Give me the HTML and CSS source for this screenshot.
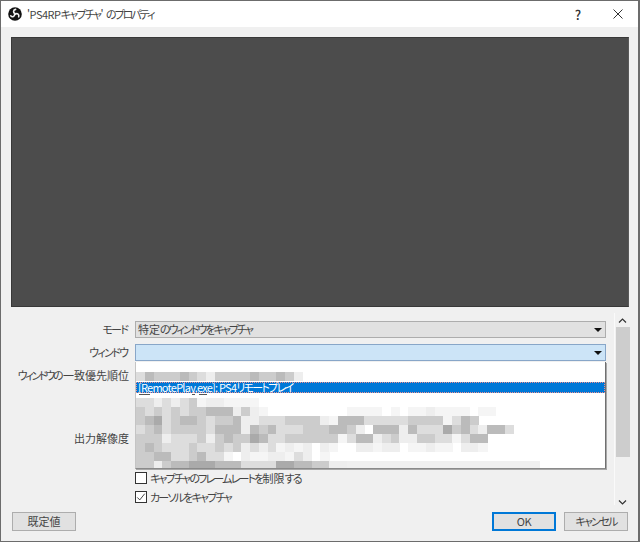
FILE: index.html
```html
<!DOCTYPE html>
<html lang="ja">
<head>
<meta charset="utf-8">
<title>'PS4RPキャプチャ' のプロパティ</title>
<link rel="stylesheet" href="styles.css">
</head>
<body>
<div class="dialog">
  <header class="titlebar">
    <svg class="logo" viewBox="0 0 14 14" width="14" height="14">
      <circle cx="7" cy="7" r="6.8" fill="#111"/>
      <g fill="none" stroke="#f0f0f0" stroke-width="1.6" stroke-linecap="round">
        <path d="M7 6.6C4.8 5.6 5.2 2.8 7.6 2.4"/>
        <path d="M7 6.6C4.8 5.6 5.2 2.8 7.6 2.4" transform="rotate(120 7 7)"/>
        <path d="M7 6.6C4.8 5.6 5.2 2.8 7.6 2.4" transform="rotate(240 7 7)"/>
      </g>
    </svg>
    <span class="title"><span class="lat">'PS4RP</span><span class="kana">キャプチャ</span><span class="lat">'</span><span class="kana title-end">のプロパティ</span></span>
    <span class="help">?</span>
    <svg class="close" viewBox="0 0 10 10" width="10" height="10">
      <path d="M.5.5l9 9M9.5.5l-9 9" stroke="#333" stroke-width="1" fill="none"/>
    </svg>
  </header>
  <main class="body">
    <div class="preview"></div>
    <div class="props">
      <div class="form">
        <div class="row">
          <label class="label"><span class="kana">モード</span></label>
          <div class="combo combo-text">特定<span class="kana">のウィンドウをキャプチャ</span><i class="arrow"></i></div>
        </div>
        <div class="row">
          <label class="label"><span class="kana">ウィンドウ</span></label>
          <div class="field">
            <div class="combo combo-open"><i class="arrow"></i></div>
            <div class="popup">
              <svg class="mosaic mosaic-top" id="mosaicTop" width="470" height="10"></svg>
              <div class="option"><span class="lat">[RemotePlay.exe]: PS4</span><span class="kana">リモートプレイ</span></div>
              <svg class="mosaic mosaic-bottom" id="mosaicBottom" width="470" height="75"></svg>
            </div>
          </div>
        </div>
        <div class="row">
          <label class="label"><span class="kana kana-long">ウィンドウの</span>一致優先順位</label>
          <div class="combo"></div>
        </div>
        <div class="row row-res">
          <label class="label">出力解像度</label>
          <div class="combo"></div>
        </div>
        <div class="checks">
          <div class="check">
            <span class="box"></span><span><span class="kana">キャプチャのフレームレートを</span>制限<span class="kana">する</span></span>
          </div>
          <div class="check">
            <span class="box">
              <svg viewBox="0 0 12 12" width="10" height="10"><path d="M1.5 6.5l3 3 6-7.5" stroke="#222" stroke-width="1" fill="none"/></svg>
            </span><span class="kana">カーソルをキャプチャ</span>
          </div>
        </div>
      </div>
      <div class="scrollbar">
        <svg class="chev" viewBox="0 0 9 5" width="9" height="5"><path d="M1 4.5l3.5-3.5 3.5 3.5" stroke="#333" stroke-width="1.2" fill="none"/></svg>
        <div class="track"><div class="thumb"></div></div>
        <svg class="chev" viewBox="0 0 9 5" width="9" height="5"><path d="M1 .5l3.5 3.5 3.5-3.5" stroke="#333" stroke-width="1.2" fill="none"/></svg>
      </div>
    </div>
    <footer class="footer">
      <button class="btn">既定値</button>
      <span class="spacer"></span>
      <button class="btn btn-default"><span class="lat">OK</span></button>
      <button class="btn"><span class="kana">キャンセル</span></button>
    </footer>
  </main>
</div>
<script src="mosaic.js"></script>
</body>
</html>
```
FILE: styles.css
```css
* { box-sizing: border-box; }
html, body { margin: 0; padding: 0; }
body {
  width: 640px;
  height: 542px;
  overflow: hidden;
  font-family: "Noto Sans CJK JP", "Noto Sans", sans-serif;
  font-size: 11px;
  font-feature-settings: "palt";
  color: #444;
}
.kana { letter-spacing: -1.7px; }
.lat { letter-spacing: -0.5px; }
.dialog {
  width: 640px;
  height: 542px;
  display: flex;
  flex-direction: column;
  border: 1px solid #6c6c6c;
  border-right-width: 2px;
  background: #f0f0f0;
}
.titlebar {
  height: 26px;
  flex: none;
  display: flex;
  align-items: center;
  background: #fff;
  padding-left: 7px;
}
.logo { flex: none; }
.title { margin-left: 5px; flex: 1; color: #444; white-space: nowrap; }
.title-end { margin-left: 3px; letter-spacing: -2px; }
.help { width: 10px; margin-right: 30px; font-size: 13px; font-weight: 500; color: #333; text-align: center; }
.close { margin-right: 15px; }
.body {
  flex: 1;
  display: flex;
  flex-direction: column;
  padding: 10px 9px 0 10px;
  min-height: 0;
}
.preview {
  height: 270px;
  flex: none;
  background: #4c4c4c;
  border: 1px solid #383838;
  border-right-color: #5a5a5a;
}
.props {
  height: 192px;
  margin-top: 6px;
  flex: none;
  display: flex;
}
.form {
  width: 596px;
  flex: none;
  padding-top: 8px;
}
.row {
  display: grid;
  grid-template-columns: 118px 471px;
  column-gap: 6px;
  height: 17px;
  margin-bottom: 6px;
  line-height: 17px;
}
.row-res { margin-top: 46px; margin-bottom: 23px; }
.label { text-align: right; white-space: nowrap; }
.label .kana:last-child { margin-right: 1.7px; }
.label .kana-long { letter-spacing: -2.3px; }
.field { position: relative; }
.combo {
  position: relative;
  height: 17px;
  padding-left: 3px;
  line-height: 15px;
  background: #e1e1e1;
  border: 1px solid #adadad;
  white-space: nowrap;
}
.combo-text { padding-left: 2px; }
.combo-text .kana { letter-spacing: -2px; }
.combo-open { background: #cce4f7; border-color: #88a6c8; }
.arrow {
  position: absolute;
  right: 3px;
  top: 6px;
  width: 0;
  height: 0;
  border-left: 4px solid transparent;
  border-right: 4px solid transparent;
  border-top: 4px solid #111;
}
.popup {
  position: absolute;
  left: 0;
  top: 18px;
  width: 471px;
  z-index: 2;
  height: 107px;
  padding-top: 10px;
  background: #fff;
  border-left: 1px solid #c4c4c4;
  border-right: 1px solid #707070;
  border-bottom: 1px solid #8a8a8a;
  box-shadow: 1px 1px 0 #a8a8a8;
}
.mosaic { display: block; }
.option {
  height: 11px;
  padding-left: 2px;
  line-height: 11px;
  background: #0078d7;
  color: #fff;
  outline: 1px dotted #f09090;
  outline-offset: -1px;
  white-space: nowrap;
}
.option .lat { letter-spacing: -0.75px; }
.checks {
  margin-left: 124px;
  display: flex;
  flex-direction: column;
  gap: 3px;
}
.check {
  height: 16px;
  display: flex;
  align-items: center;
  line-height: 16px;
  white-space: nowrap;
}
.check .kana { letter-spacing: -1.8px; }
.box {
  width: 12px;
  height: 12px;
  flex: none;
  margin-right: 3px;
  display: flex;
  align-items: center;
  justify-content: center;
  background: #fff;
  border: 1px solid #333;
}
.scrollbar {
  width: 16px;
  margin-left: 7px;
  flex: none;
  display: flex;
  flex-direction: column;
  align-items: center;
  border-left: 1px solid #fafafa;
  padding-top: 5px;
}
.chev { flex: none; }
.track { flex: 1; width: 14px; padding-top: 4px; padding-bottom: 34px; }
.thumb { height: 130px; background: #cdcdcd; }
.footer {
  flex: none;
  height: 19px;
  margin-top: 7px;
  margin-left: 1px;
  margin-right: 1px;
  display: flex;
  gap: 8px;
}
.spacer { flex: 1; }
.btn {
  width: 64px;
  height: 19px;
  padding: 0;
  font: inherit;
  font-feature-settings: "palt";
  line-height: 15px;
  color: #444;
  background: #e1e1e1;
  border: 1px solid #adadad;
}
.btn-default { border: 2px solid #0078d7; }
```
FILE: mosaic.js
```js
// Pixelated (censored) window names in the open drop-down list.
// One hex digit per cell = grey level; "g" = near white, "h" = pale strip.
var SHADES = { g: "#f5f5f5", h: "#f0f0f0" };
var CELL = 8.78;
var TOP = ["dbcccbcdeccccbccbce"];
var BOTTOM = [
  "ddededcgeegggg",
  "cdcdcdccbbbecegfffffffffggggfgfggeggggfgg",
  "cbadcbbcdccbeedddccccegbbbdddddccccgdbc",
  "dcbdccccdbbbebcbdddcccbbcefbbbebdddacbdebbd",
  "cccedddcecbccabddccccccgdbbedceeccddgdbb",
  "cbcdddcddcdcededgegefegffeegeefggeggfeeg",
  "ccbbddcbddgfeggeegdefg",
  "ccecbbaaabbbddddaabbcceehhhhhhhhhhhhhhhhhhhhhh"
];
var NS = "http://www.w3.org/2000/svg";

function shade(ch) {
  if (SHADES[ch]) return SHADES[ch];
  return "#" + ch + ch + ch + ch + ch + ch;
}

function rect(svg, x, y, w, h, fill) {
  var r = document.createElementNS(NS, "rect");
  r.setAttribute("x", x);
  r.setAttribute("y", y);
  r.setAttribute("width", w);
  r.setAttribute("height", h);
  r.setAttribute("fill", fill);
  r.setAttribute("shape-rendering", "crispEdges");
  svg.appendChild(r);
}

function paint(svg, rows, top) {
  rows.forEach(function (row, r) {
    for (var i = 0; i < row.length; i++) {
      if (row[i] !== "f") rect(svg, i * CELL, top + r * 9, CELL + 0.5, 9, shade(row[i]));
    }
  });
}

var topSvg = document.getElementById("mosaicTop");
var bottomSvg = document.getElementById("mosaicBottom");
paint(topSvg, TOP, 0);
paint(bottomSvg, BOTTOM, 5);
// Stray tips of the next list entry's text that the pixelation left behind.
[[3, 11], [56, 3], [63, 8]].forEach(function (d) {
  rect(bottomSvg, d[0], 1, d[1], 1, "#555");
});
```
